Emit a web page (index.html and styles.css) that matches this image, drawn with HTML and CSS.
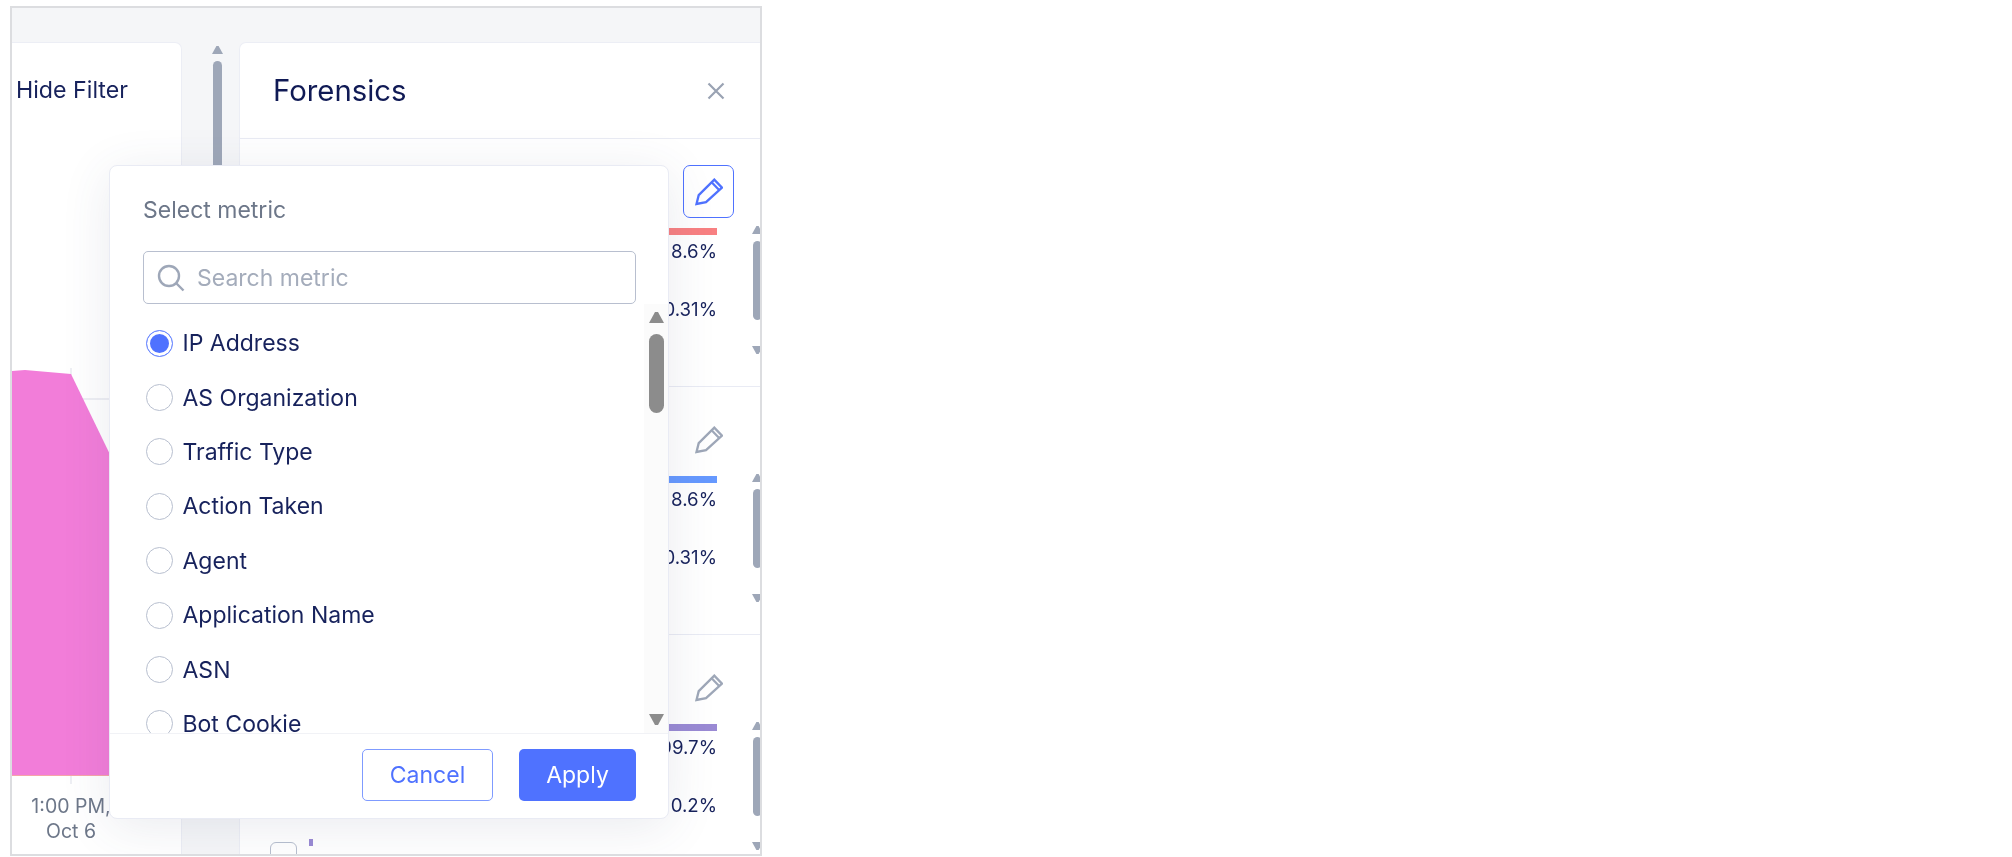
FILE: index.html
```html
<!DOCTYPE html>
<html lang="en">
<head>
<meta charset="utf-8">
<title>Forensics</title>
<link rel="stylesheet" href="styles.css">
</head>
<body>
<div class="frame">
  <section class="chart-card">
    <div class="hide-filter">Hide Filter</div>
    <svg class="chart" width="170" height="813" viewBox="0 0 170 813">
      <line class="grid" x1="0" y1="356" x2="170" y2="356"/>
      <line class="grid" x1="59" y1="325" x2="59" y2="332"/>
      <polygon class="area" points="0,328 13,327 59,331 170,560 170,732 0,732"/>
      <line class="base" x1="0" y1="732.5" x2="170" y2="732.5"/>
      <line class="grid" x1="59" y1="733" x2="59" y2="741"/>
      <text class="tick-label" x="59" y="770">1:00 PM,</text>
      <text class="tick-label" x="59" y="795">Oct 6</text>
    </svg>
  </section>
  <div class="gutter">
    <div class="sbar">
      <span class="arr up"></span>
      <span class="thumb long"></span>
    </div>
  </div>
  <section class="panel">
    <header class="panel-head">
      <h1>Forensics</h1>
      <svg class="close" width="18" height="18" viewBox="0 0 18 18"><path d="M1.5 1.5l15 15M16.5 1.5l-15 15"/></svg>
    </header>

    <article class="row">
      <div class="row-tools">
        <button class="edit active"><svg width="28" height="28" viewBox="0 0 28 28"><path d="M1.5 26l2.2-8.8L19.3 1.6 27 9.6 11 24.2z"/><path d="M16.6 4.3l7.8 7.9"/></svg></button>
      </div>
      <div class="row-body">
        <div class="vals">
          <div class="bar red"></div>
          <div class="val">8.6%</div>
          <div class="val">0.31%</div>
        </div>
        <div class="sbar">
          <span class="arr up"></span>
          <span class="thumb"></span>
          <span class="arr down"></span>
        </div>
      </div>
    </article>

    <article class="row">
      <div class="row-tools">
        <button class="edit"><svg width="28" height="28" viewBox="0 0 28 28"><path d="M1.5 26l2.2-8.8L19.3 1.6 27 9.6 11 24.2z"/><path d="M16.6 4.3l7.8 7.9"/></svg></button>
      </div>
      <div class="row-body">
        <div class="vals">
          <div class="bar blue"></div>
          <div class="val">8.6%</div>
          <div class="val">0.31%</div>
        </div>
        <div class="sbar">
          <span class="arr up"></span>
          <span class="thumb"></span>
          <span class="arr down"></span>
        </div>
      </div>
    </article>

    <article class="row">
      <div class="row-tools">
        <button class="edit"><svg width="28" height="28" viewBox="0 0 28 28"><path d="M1.5 26l2.2-8.8L19.3 1.6 27 9.6 11 24.2z"/><path d="M16.6 4.3l7.8 7.9"/></svg></button>
      </div>
      <div class="row-body">
        <div class="vals">
          <div class="bar purple"></div>
          <div class="val">99.7%</div>
          <div class="val">0.2%</div>
          <div class="legend"><span class="check"></span><span class="swatch"></span></div>
        </div>
        <div class="sbar">
          <span class="arr up"></span>
          <span class="thumb"></span>
          <span class="arr down"></span>
        </div>
      </div>
    </article>
  </section>

  <div class="popover">
    <div class="pop-head">
      <div class="pop-title">Select metric</div>
      <label class="search">
        <svg width="28" height="28" viewBox="0 0 28 28"><circle cx="12" cy="12" r="10"/><path d="M19.5 19.5l7 7"/></svg>
        <span class="placeholder">Search metric</span>
      </label>
    </div>
    <div class="pop-body">
      <ul class="options">
        <li class="opt selected"><span class="radio"></span>IP Address</li>
        <li class="opt"><span class="radio"></span>AS Organization</li>
        <li class="opt"><span class="radio"></span>Traffic Type</li>
        <li class="opt"><span class="radio"></span>Action Taken</li>
        <li class="opt"><span class="radio"></span>Agent</li>
        <li class="opt"><span class="radio"></span>Application Name</li>
        <li class="opt"><span class="radio"></span>ASN</li>
        <li class="opt"><span class="radio"></span>Bot Cookie</li>
      </ul>
      <div class="pop-scroll">
        <span class="arr up"></span>
        <span class="thumb"></span>
        <span class="spacer"></span>
        <span class="arr down"></span>
      </div>
    </div>
    <footer class="pop-foot">
      <button class="btn ghost">Cancel</button>
      <button class="btn solid">Apply</button>
    </footer>
  </div>
</div>
</body>
</html>
```
FILE: styles.css
```css
* { box-sizing: border-box; }
html, body { height: 100%; }
body {
  margin: 0;
  padding: 6px 0 0 10px;
  background: #fff;
  font-family: Inter, "Liberation Sans", sans-serif;
  color: #17225c;
  overflow: hidden;
}
.frame {
  position: relative;
  width: 752px;
  height: 850px;
  border: 2px solid #dcdde0;
  background: #f5f6f8;
  padding-top: 34px;
  display: flex;
  overflow: hidden;
  filter: blur(0.35px);
}
.chart-card {
  position: relative;
  width: 170px;
  flex-shrink: 0;
  background: #fff;
  border: 1px solid #eceef5;
  border-width: 1px 1px 0 0;
  border-top-right-radius: 7px;
}
.hide-filter {
  padding: 34px 0 0 4px;
  font-size: 23.2px;
  line-height: 26px;
}
.chart { position: absolute; left: 0; top: 0; }
.grid { stroke: #e8eaf0; stroke-width: 1.5; }
.area { fill: #f27dd9; }
.base { stroke: #f4a5a8; stroke-width: 1; }
.tick-label {
  font-size: 19.5px;
  fill: #6d7789;
  text-anchor: middle;
}
.gutter {
  width: 57px;
  flex-shrink: 0;
  padding: 4px 0 0 30px;
}
.sbar {
  width: 11px;
  flex-shrink: 0;
  display: flex;
  flex-direction: column;
  align-items: center;
}
.arr {
  display: block;
  width: 11px;
  height: 8px;
  background: #9ea7b8;
}
.arr.up { clip-path: polygon(40% 0, 60% 0, 100% 100%, 0 100%); }
.arr.down { clip-path: polygon(0 0, 100% 0, 60% 100%, 40% 100%); }
.thumb {
  display: block;
  width: 9px;
  height: 79px;
  margin: 7px 0 26px;
  border-radius: 5px;
  background: #9ea7b8;
}
.thumb.long { height: 240px; }
.panel {
  flex: 1;
  min-width: 0;
  background: #fff;
  border: 1px solid #eceef5;
  border-width: 1px 0 0 1px;
  border-top-left-radius: 7px;
}
.panel-head {
  height: 96px;
  display: flex;
  align-items: center;
  justify-content: space-between;
  padding: 0 35px 0 33px;
  border-bottom: 1px solid #e9ebf4;
}
.panel-head h1 {
  margin: 0;
  font-size: 29.33px;
  font-weight: 400;
  color: #101a55;
}
.close { fill: none; stroke: #9aa3b3; stroke-width: 2.2; }
.row {
  height: 248px;
  padding-top: 26px;
  border-bottom: 1px solid #e9ebf4;
  overflow: hidden;
}
.row-tools {
  display: flex;
  justify-content: flex-end;
  padding-right: 26px;
}
.edit {
  width: 51px;
  height: 53px;
  padding: 0;
  display: flex;
  align-items: center;
  justify-content: center;
  background: #fff;
  border: 1px solid transparent;
  border-radius: 7px;
}
.edit svg { fill: none; stroke: #9ea7b8; stroke-width: 2.3; }
.edit.active { border-color: #4f72ff; }
.edit.active svg { stroke: #4f72ff; }
.row-body {
  display: flex;
  margin-top: 10px;
}
.vals {
  flex: 1;
  min-width: 0;
  padding-right: 35px;
}
.row-body .sbar { margin: -2px -3px 0 0; }
.bar { height: 7px; margin-bottom: 5px; }
.bar.red { background: #f88082; }
.bar.blue { background: #6699ff; }
.bar.purple { background: #9a8ad4; }
.val {
  text-align: right;
  font-size: 18.67px;
  line-height: 24px;
  margin-bottom: 33.5px;
}
.legend {
  display: flex;
  gap: 12px;
  padding-left: 30px;
  margin-top: -9px;
}
.check {
  width: 27px;
  height: 27px;
  border: 1px solid #b8bfcf;
  border-radius: 6px;
}
.swatch {
  width: 4px;
  height: 7px;
  margin-top: -3px;
  background: #9a8ad4;
}
.popover {
  position: absolute;
  left: 97px;
  top: 157px;
  width: 560px;
  height: 654px;
  display: flex;
  flex-direction: column;
  background: #fff;
  border: 1px solid #e9ebf4;
  border-radius: 8px;
  box-shadow: 0 8px 50px rgba(60, 70, 110, 0.11);
}
.pop-head { padding: 30px 32px 0 33px; }
.pop-title {
  font-size: 23px;
  line-height: 28px;
  color: #6d7789;
}
.search {
  margin-top: 27px;
  height: 53px;
  display: flex;
  align-items: center;
  gap: 12px;
  padding-left: 13px;
  border: 1.5px solid #b8bfcf;
  border-radius: 5px;
}
.search svg { fill: none; stroke: #9ea7b8; stroke-width: 2.4; }
.placeholder { font-size: 23px; color: #a4acbb; }
.pop-body {
  position: relative;
  flex: 1;
  min-height: 0;
  overflow: hidden;
}
.options {
  list-style: none;
  margin: 0;
  padding: 12px 0 0 36px;
}
.opt {
  height: 54.4px;
  display: flex;
  align-items: center;
  gap: 9.5px;
  font-size: 23px;
}
.radio {
  width: 27px;
  height: 27px;
  border: 1px solid #b8bfcf;
  border-radius: 50%;
}
.selected .radio {
  border-color: #6f8cff;
  background: #4f72ff;
  box-shadow: inset 0 0 0 3px #fff;
}
.pop-scroll {
  position: absolute;
  right: 0;
  top: 0;
  bottom: 0;
  width: 24px;
  padding: 8px 4px 8px 5px;
  background: #fbfbfb;
  display: flex;
  flex-direction: column;
  align-items: center;
}
.pop-scroll .arr {
  width: 15px;
  height: 11px;
  background: #8c8c8c;
}
.pop-scroll .thumb {
  width: 15px;
  height: 79px;
  margin: 11px 0 0;
  border-radius: 8px;
  background: #8c8c8c;
}
.spacer { flex: 1; }
.pop-foot {
  height: 85px;
  flex-shrink: 0;
  display: flex;
  justify-content: flex-end;
  gap: 26px;
  padding: 15px 32px 0 0;
  border-top: 1px solid #f1f2f6;
}
.btn {
  height: 52px;
  font-family: inherit;
  font-size: 23px;
  border-radius: 5px;
}
.ghost {
  width: 131px;
  background: #fff;
  color: #4f72ff;
  border: 1.5px solid #7f9bff;
}
.solid {
  width: 117px;
  background: #4f72ff;
  color: #fff;
  border: 0;
}
```
